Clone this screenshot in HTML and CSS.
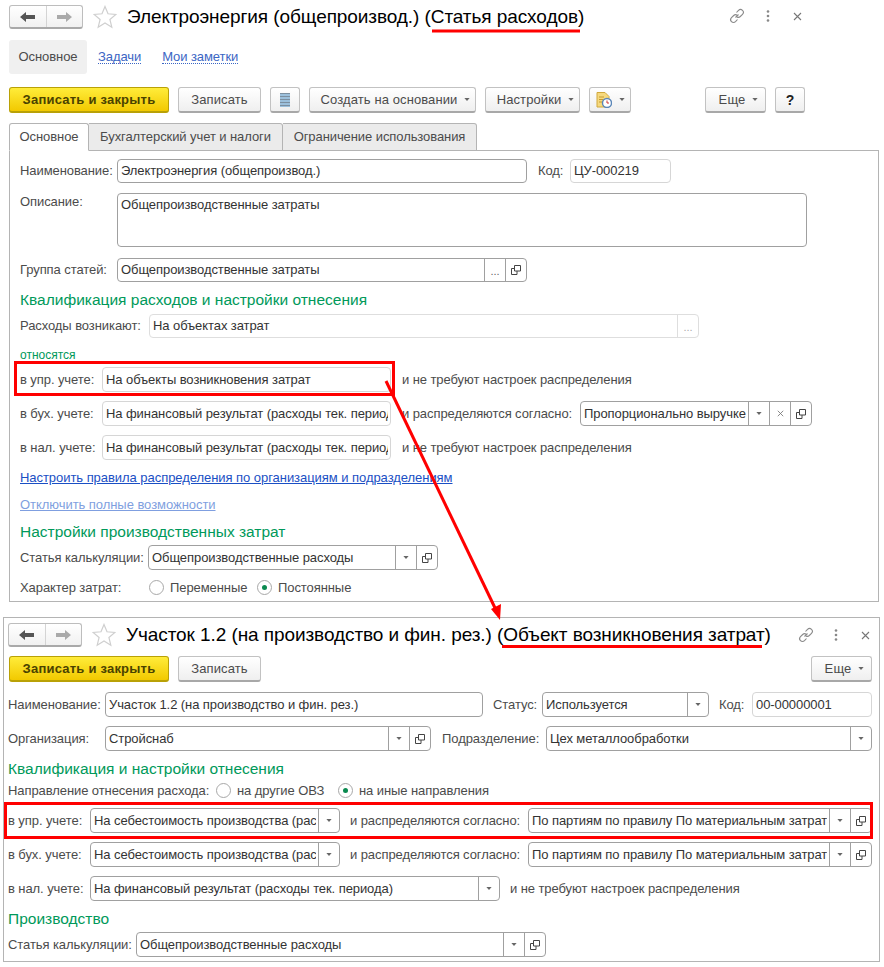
FILE: index.html
```html
<!DOCTYPE html>
<html lang="ru">
<head>
<meta charset="utf-8">
<title>Статья расходов</title>
<link rel="stylesheet" href="styles.css">
</head>
<body>
<svg class="defs" width="0" height="0">
  <symbol id="i-open" viewBox="0 0 10 10"><path d="M3.500 .5h6v5.500h-6z M3.500 3.500h-3v6h5.500v-3.500" fill="none" stroke="#444" stroke-width="1"/></symbol>
  <symbol id="i-drop" viewBox="0 0 8 4"><path d="M.5 0h7L4 4z" fill="#666"/></symbol>
  <symbol id="i-close" viewBox="0 0 9 9"><path d="M1 1l7 7M8 1l-7 7" stroke="#777" stroke-width="1.100" fill="none"/></symbol>
  <symbol id="i-star" viewBox="0 0 24 24"><path d="M12 1.500l3 7.300 7.900.6-6 5.100 1.900 7.700-6.800-4.200-6.800 4.200 1.900-7.700-6-5.100 7.900-.6z" fill="#fff" stroke="#cfcfcf" stroke-width="1.200"/></symbol>
  <symbol id="i-link" viewBox="0 0 16 16"><path d="M6.500 9.500l3-3M7.500 4.500l2-2.200a2.800 2.800 0 0 1 4 4l-2.200 2.200a2.800 2.800 0 0 1-3.300.4M8.500 11.500l-2 2.200a2.800 2.800 0 0 1-4-4l2.200-2.200a2.800 2.800 0 0 1 3.300-.4" fill="none" stroke="#8a8a8a" stroke-width="1.100"/></symbol>
  <symbol id="i-kebab" viewBox="0 0 4 12"><circle cx="2" cy="1.500" r="1.300" fill="#888"/><circle cx="2" cy="6" r="1.300" fill="#888"/><circle cx="2" cy="10.500" r="1.300" fill="#888"/></symbol>
  <symbol id="i-back" viewBox="0 0 15 10"><path d="M0 5l6-5v3h9v4H6v3z" fill="#555"/></symbol>
  <symbol id="i-fwd" viewBox="0 0 15 10"><path d="M15 5L9 0v3H0v4h9v3z" fill="#aaa"/></symbol>
</svg>

<div class="win-one">
  <div class="head head-one">
    <div class="nav"><span class="nav-btn"><svg class="nav-ico"><use href="#i-back"/></svg></span><span class="nav-btn"><svg class="nav-ico"><use href="#i-fwd"/></svg></span></div>
    <svg class="star"><use href="#i-star"/></svg>
    <div class="title">Электроэнергия (общепроизвод.) (Статья расходов)</div>
    <div class="head-tools tools-one">
      <svg class="ico-link"><use href="#i-link"/></svg>
      <svg class="ico-kebab"><use href="#i-kebab"/></svg>
      <svg class="ico-x"><use href="#i-close"/></svg>
    </div>
  </div>

  <div class="sections">
    <span class="section current">Основное</span>
    <a class="section-link gap-11">Задачи</a>
    <a class="section-link gap-21">Мои заметки</a>
  </div>

  <div class="toolbar">
    <span class="btn primary w-160">Записать и закрыть</span>
    <span class="btn w-83">Записать</span>
    <span class="btn w-30"><svg class="ico-list" viewBox="0 0 10 14"><path d="M0 0h10v14H0z" fill="#9cc0dc"/><path d="M0 .5h10M0 3.500h10M0 6.500h10M0 9.500h10M0 12.500h10" stroke="#7c8fa0" stroke-width="1"/></svg></span>
    <span class="btn drop w-167">Создать на основании<svg class="caret"><use href="#i-drop"/></svg></span>
    <span class="btn drop w-95">Настройки<svg class="caret"><use href="#i-drop"/></svg></span>
    <span class="btn w-42"><svg class="ico-doc" viewBox="0 0 16 16"><path d="M1 .5h8l4 4v10.500H1z" fill="#f6d97e" stroke="#d0a83c"/><path d="M3 5h5M3 7.500h4M3 10h3" stroke="#c49a30"/><circle cx="11" cy="11" r="4.500" fill="#fff" stroke="#5a86b8" stroke-width="1.400"/><path d="M11 8.500V11h2" stroke="#c33" fill="none"/></svg><svg class="caret"><use href="#i-drop"/></svg></span>
    <span class="btn drop w-61 push-74">Еще<svg class="caret"><use href="#i-drop"/></svg></span>
    <span class="btn w-30 help">?</span>
  </div>

  <div class="tabs">
    <span class="tab active w-tab1">Основное</span>
    <span class="tab w-tab2">Бухгалтерский учет и налоги</span>
    <span class="tab w-tab3">Ограничение использования</span>
  </div>

  <div class="panel">
    <div class="row">
      <span class="lbl l-97">Наименование:</span>
      <div class="field h-24 w-410"><span class="val">Электроэнергия (общепроизвод.)</span></div>
      <span class="lbl gap-11 l-32">Код:</span>
      <div class="field h-24 w-101 soft"><span class="val">ЦУ-000219</span></div>
    </div>
    <div class="row mt-10 top">
      <span class="lbl l-97 desc">Описание:</span>
      <div class="field w-690 tall"><span class="val">Общепроизводственные затраты</span></div>
    </div>
    <div class="row mt-11">
      <span class="lbl l-97">Группа статей:</span>
      <div class="field h-24 w-410"><span class="val">Общепроизводственные затраты</span><span class="fbtn dots">...</span><span class="fbtn"><svg class="ico-open"><use href="#i-open"/></svg></span></div>
    </div>
    <div class="heading mt-9">Квалификация расходов и настройки отнесения</div>
    <div class="row mt-5">
      <span class="lbl l-129">Расходы возникают:</span>
      <div class="field h-24 w-550 off"><span class="val">На объектах затрат</span><span class="fbtn dots">...</span></div>
    </div>
    <div class="subhead mt-10">относятся</div>
    <div class="row mt-5">
      <span class="lbl l-82">в упр. учете:</span>
      <div class="field w-289 soft"><span class="val">На объекты возникновения затрат</span></div>
      <span class="lbl gap-11">и не требуют настроек распределения</span>
    </div>
    <div class="row mt-9">
      <span class="lbl l-82">в бух. учете:</span>
      <div class="field w-289 soft"><span class="val">На финансовый результат (расходы тек. периода)</span></div>
      <span class="lbl gap-11 l-178">и распределяются согласно:</span>
      <div class="field w-232"><span class="val">Пропорционально выручке</span><span class="fbtn"><svg class="ico-drop"><use href="#i-drop"/></svg></span><span class="fbtn"><svg class="ico-close"><use href="#i-close"/></svg></span><span class="fbtn"><svg class="ico-open"><use href="#i-open"/></svg></span></div>
    </div>
    <div class="row mt-9">
      <span class="lbl l-82">в нал. учете:</span>
      <div class="field w-289 soft"><span class="val">На финансовый результат (расходы тек. периода)</span></div>
      <span class="lbl gap-11">и не требуют настроек распределения</span>
    </div>
    <a class="link mt-11">Настроить правила распределения по организациям и подразделениям</a>
    <a class="link faint mt-13">Отключить полные возможности</a>
    <div class="heading mt-11">Настройки производственных затрат</div>
    <div class="row mt-4">
      <span class="lbl l-128">Статья калькуляции:</span>
      <div class="field w-290"><span class="val">Общепроизводственные расходы</span><span class="fbtn"><svg class="ico-drop"><use href="#i-drop"/></svg></span><span class="fbtn"><svg class="ico-open"><use href="#i-open"/></svg></span></div>
    </div>
    <div class="row mt-10">
      <span class="lbl l-129">Характер затрат:</span>
      <span class="radio"></span><span class="lbl r-87">Переменные</span>
      <span class="radio on"></span><span class="lbl">Постоянные</span>
    </div>
  </div>
</div>

<div class="win-two">
  <div class="head">
    <div class="nav"><span class="nav-btn"><svg class="nav-ico"><use href="#i-back"/></svg></span><span class="nav-btn"><svg class="nav-ico"><use href="#i-fwd"/></svg></span></div>
    <svg class="star"><use href="#i-star"/></svg>
    <div class="title">Участок 1.2 (на производство и фин. рез.) (Объект возникновения затрат)</div>
    <div class="head-tools tools-two">
      <svg class="ico-link"><use href="#i-link"/></svg>
      <svg class="ico-kebab"><use href="#i-kebab"/></svg>
      <svg class="ico-x"><use href="#i-close"/></svg>
    </div>
  </div>
  <div class="toolbar tb-two">
    <span class="btn primary w-160">Записать и закрыть</span>
    <span class="btn w-83">Записать</span>
    <span class="btn drop w-61 end">Еще<svg class="caret"><use href="#i-drop"/></svg></span>
  </div>
  <div class="row mt-10">
    <span class="lbl l-97">Наименование:</span>
    <div class="field w-378"><span class="val">Участок 1.2 (на производство и фин. рез.)</span></div>
    <span class="lbl gap-10 l-49">Статус:</span>
    <div class="field w-167"><span class="val">Используется</span><span class="fbtn"><svg class="ico-drop"><use href="#i-drop"/></svg></span></div>
    <span class="lbl gap-10 l-33">Код:</span>
    <div class="field w-120 soft"><span class="val">00-00000001</span></div>
  </div>
  <div class="row mt-9">
    <span class="lbl l-97">Организация:</span>
    <div class="field w-326"><span class="val">Стройснаб</span><span class="fbtn"><svg class="ico-drop"><use href="#i-drop"/></svg></span><span class="fbtn"><svg class="ico-open"><use href="#i-open"/></svg></span></div>
    <span class="lbl gap-11 l-104">Подразделение:</span>
    <div class="field w-326"><span class="val">Цех металлообработки</span><span class="fbtn"><svg class="ico-drop"><use href="#i-drop"/></svg></span></div>
  </div>
  <div class="heading mt-9">Квалификация и настройки отнесения</div>
  <div class="row mt-5">
    <span class="lbl l-208">Направление отнесения расхода:</span>
    <span class="radio"></span><span class="lbl r-101">на другие ОВЗ</span>
    <span class="radio on"></span><span class="lbl">на иные направления</span>
  </div>
  <div class="row mt-10">
    <span class="lbl l-82">в упр. учете:</span>
    <div class="field w-250"><span class="val">На себестоимость производства (расходы)</span><span class="fbtn"><svg class="ico-drop"><use href="#i-drop"/></svg></span></div>
    <span class="lbl gap-10 l-178">и распределяются согласно:</span>
    <div class="field w-344"><span class="val">По партиям по правилу По материальным затратам</span><span class="fbtn"><svg class="ico-drop"><use href="#i-drop"/></svg></span><span class="fbtn"><svg class="ico-open"><use href="#i-open"/></svg></span></div>
  </div>
  <div class="row mt-9">
    <span class="lbl l-82">в бух. учете:</span>
    <div class="field w-250"><span class="val">На себестоимость производства (расходы)</span><span class="fbtn"><svg class="ico-drop"><use href="#i-drop"/></svg></span></div>
    <span class="lbl gap-10 l-178">и распределяются согласно:</span>
    <div class="field w-344"><span class="val">По партиям по правилу По материальным затратам</span><span class="fbtn"><svg class="ico-drop"><use href="#i-drop"/></svg></span><span class="fbtn"><svg class="ico-open"><use href="#i-open"/></svg></span></div>
  </div>
  <div class="row mt-9">
    <span class="lbl l-82">в нал. учете:</span>
    <div class="field w-410"><span class="val">На финансовый результат (расходы тек. периода)</span><span class="fbtn"><svg class="ico-drop"><use href="#i-drop"/></svg></span></div>
    <span class="lbl gap-10">и не требуют настроек распределения</span>
  </div>
  <div class="heading mt-9">Производство</div>
  <div class="row mt-4">
    <span class="lbl l-128">Статья калькуляции:</span>
    <div class="field w-410"><span class="val">Общепроизводственные расходы</span><span class="fbtn"><svg class="ico-drop"><use href="#i-drop"/></svg></span><span class="fbtn"><svg class="ico-open"><use href="#i-open"/></svg></span></div>
  </div>
</div>

<svg class="marks" viewBox="0 0 884 967">
  <path d="M432 31H580M502 646.500H762" stroke="#f00" stroke-width="3" fill="none"/>
  <rect x="15.500" y="362.500" width="378" height="32" fill="none" stroke="#f00" stroke-width="3"/>
  <rect x="5.500" y="803.500" width="866" height="34" fill="none" stroke="#f00" stroke-width="3"/>
  <path d="M386 381L496 610" stroke="#f00" stroke-width="3" fill="none"/>
  <path d="M500 620L491 609L501 604z" fill="#f00"/>
</svg>
</body>
</html>
```

FILE: styles.css
```css
* { box-sizing: border-box; }
html, body { margin: 0; padding: 0; background: #fff; }
body {
  width: 884px;
  height: 967px;
  overflow: hidden;
  position: relative;
  font: 13px/14px "Liberation Sans", Arial, sans-serif;
  letter-spacing: -.08px;
  color: #4b4b4b;
}
.defs { position: absolute; }

/* windows */
.win-one { padding-top: 5px; }
.win-two {
  margin: 15px 0 0 3px;
  width: 877px;
  height: 345px;
  border: 1px solid #b4b4b4;
  padding: 5px 6px 0 4px;
}

/* header */
.head { display: flex; align-items: center; height: 24px; position: relative; }
.head-one { margin-left: 9px; }
.nav {
  display: flex;
  width: 74px;
  height: 24px;
  border: 1px solid #bdbdbd;
  border-bottom: 2px solid #a9a9a9;
  border-radius: 3px;
  background: linear-gradient(#fff, #f1f1f1);
}
.nav-btn { flex: 1; display: flex; align-items: center; justify-content: center; }
.nav-btn + .nav-btn { border-left: 1px solid #d4d4d4; }
.nav-ico { width: 15px; height: 10px; }
.star { width: 24px; height: 24px; margin-left: 10px; }
.title { margin-left: 10px; font-size: 19px; line-height: 24px; color: #000; white-space: nowrap; letter-spacing: -.08px; }
.head-tools { display: flex; align-items: center; margin-left: auto; }
.tools-one { position: absolute; left: 720px; top: 0; height: 22px; }
.tools-two { height: 22px; }
.ico-link { width: 16px; height: 16px; }
.ico-kebab { width: 4px; height: 12px; margin-left: 21px; }
.ico-x { width: 9px; height: 9px; margin-left: 23px; }
.tools-two .ico-kebab { margin-left: 20px; }
.tools-two .ico-x { margin-right: 3px; }

/* sections */
.sections { display: flex; align-items: center; margin: 11px 0 0 9px; height: 34px; }
.section { display: flex; align-items: center; justify-content: center; width: 78px; height: 34px; background: #f0f0f0; border-radius: 3px; }
.section-link { color: #3b66c4; border-bottom: 1px dotted #3b66c4; line-height: 13px; }
.gap-21 { margin-left: 21px; }
.gap-11 { margin-left: 11px; }
.gap-10 { margin-left: 10px; }

/* toolbar */
.toolbar { display: flex; gap: 9px; margin: 13px 0 0 9px; height: 26px; }
.tb-two { margin: 9px 0 0 1px; width: 863px; }
.btn {
  display: flex;
  align-items: center;
  justify-content: center;
  height: 26px;
  border: 1px solid #c2c2c2;
  border-bottom: 2px solid #a8a8a8;
  border-radius: 3px;
  background: linear-gradient(#fff, #efefef);
  white-space: nowrap;
  letter-spacing: .1px;
}
.btn.drop { padding-left: 6px; }
.primary {
  border-color: #b9a106;
  background: linear-gradient(#ffec3a, #f2c900);
  font-weight: bold;
  color: #4a4200;
  font-size: 13px;
  letter-spacing: .22px;
}
.help { font-weight: bold; font-size: 14px; color: #222; }
.push-74 { margin-left: 65px; }
.end { margin-left: auto; }
.caret { width: 6px; height: 3px; margin-left: 7px; }
.ico-list { width: 10px; height: 14px; }
.ico-doc { width: 16px; height: 16px; }
.w-30 { width: 30px; }
.w-42 { width: 42px; }
.w-61 { width: 61px; }
.w-83 { width: 83px; }
.w-95 { width: 95px; }
.w-160 { width: 160px; }
.w-167 { width: 167px; }

/* tabs */
.tabs { display: flex; margin: 10px 0 0 9px; height: 28px; position: relative; }
.tab {
  display: flex;
  align-items: center;
  justify-content: center;
  height: 28px;
  border: 1px solid #b4b4b4;
  border-left: 0;
  border-radius: 0 3px 0 0;
  background: #ebebeb;
  white-space: nowrap;
}
.tab.active { background: #fff; border-left: 1px solid #b4b4b4; border-bottom-color: #fff; border-radius: 3px 3px 0 0; position: relative; z-index: 1; }
.w-tab1 { width: 80px; }
.w-tab2 { width: 194px; }
.w-tab3 { width: 194px; }

/* panel */
.panel {
  margin: -1px 0 0 9px;
  width: 870px;
  height: 452px;
  border: 1px solid #b4b4b4;
  padding: 8px 0 0 10px;
}

/* rows */
.row { display: flex; align-items: center; }
.row.top { align-items: flex-start; }
.lbl { white-space: nowrap; flex: none; }
.desc { margin-top: 1px; line-height: 16px; }
.l-32 { width: 32px; }
.l-33 { width: 33px; }
.l-49 { width: 49px; }
.l-82 { width: 82px; }
.l-97 { width: 97px; }
.l-104 { width: 104px; }
.l-128 { width: 128px; }
.l-129 { width: 129px; }
.l-178 { width: 178px; }
.l-208 { width: 208px; }
.r-87 { width: 87px; }
.r-101 { width: 101px; }
.mt-4 { margin-top: 4px; }
.mt-5 { margin-top: 5px; }
.mt-9 { margin-top: 9px; }
.mt-10 { margin-top: 10px; }
.mt-11 { margin-top: 11px; }
.mt-13 { margin-top: 13px; }

/* fields */
.field {
  display: flex;
  flex: none;
  height: 25px;
  border: 1px solid #a0a0a0;
  border-radius: 4px;
  background: #fff;
  overflow: hidden;
}
.field.h-24 { height: 24px; }
.field.tall { height: 54px; }
.field.tall .val { align-items: flex-start; padding-top: 4px; }
.field.soft { border-color: #d6d6d6; }
.field.off { border-color: #dedede; }
.field.off .fbtn { border-left-color: #dedede; color: #aaa; }
.val {
  flex: 1;
  min-width: 0;
  display: flex;
  align-items: center;
  margin: 0 2px 0 3px;
  white-space: nowrap;
  overflow: hidden;
  color: #333;
}
.fbtn {
  flex: none;
  width: 21px;
  display: flex;
  align-items: center;
  justify-content: center;
  border-left: 1px solid #a0a0a0;
}
.dots { color: #666; font-size: 11px; padding-top: 1px; }
.ico-open { width: 10px; height: 10px; }
.ico-drop { width: 6px; height: 3px; }
.ico-close { width: 7px; height: 7px; }
.w-101 { width: 101px; }
.w-120 { width: 120px; }
.w-232 { width: 232px; }
.w-250 { width: 250px; }
.w-289 { width: 289px; }
.w-290 { width: 290px; }
.w-326 { width: 326px; }
.w-344 { width: 344px; }
.w-378 { width: 378px; }
.w-410 { width: 410px; }
.w-550 { width: 550px; }
.w-690 { width: 690px; }

/* text */
.heading { font-size: 15.5px; line-height: 18px; color: #00995a; letter-spacing: 0; }
.subhead { font-size: 12px; line-height: 14px; color: #00995a; letter-spacing: 0; }
.link { display: block; width: max-content; color: #1a4fc4; text-decoration: underline; line-height: 14px; letter-spacing: -.05px; }
.link.faint { color: #7f9fe0; }

/* radios */
.radio {
  flex: none;
  width: 15px;
  height: 15px;
  margin-right: 6px;
  border: 1px solid #a8a8a8;
  border-radius: 50%;
  background: #fff;
  position: relative;
}
.radio.on::after {
  content: "";
  position: absolute;
  left: 4px;
  top: 4px;
  width: 5px;
  height: 5px;
  border-radius: 50%;
  background: #0a8a50;
}

/* annotations */
.marks { position: absolute; left: 0; top: 0; width: 884px; height: 967px; pointer-events: none; }
```
